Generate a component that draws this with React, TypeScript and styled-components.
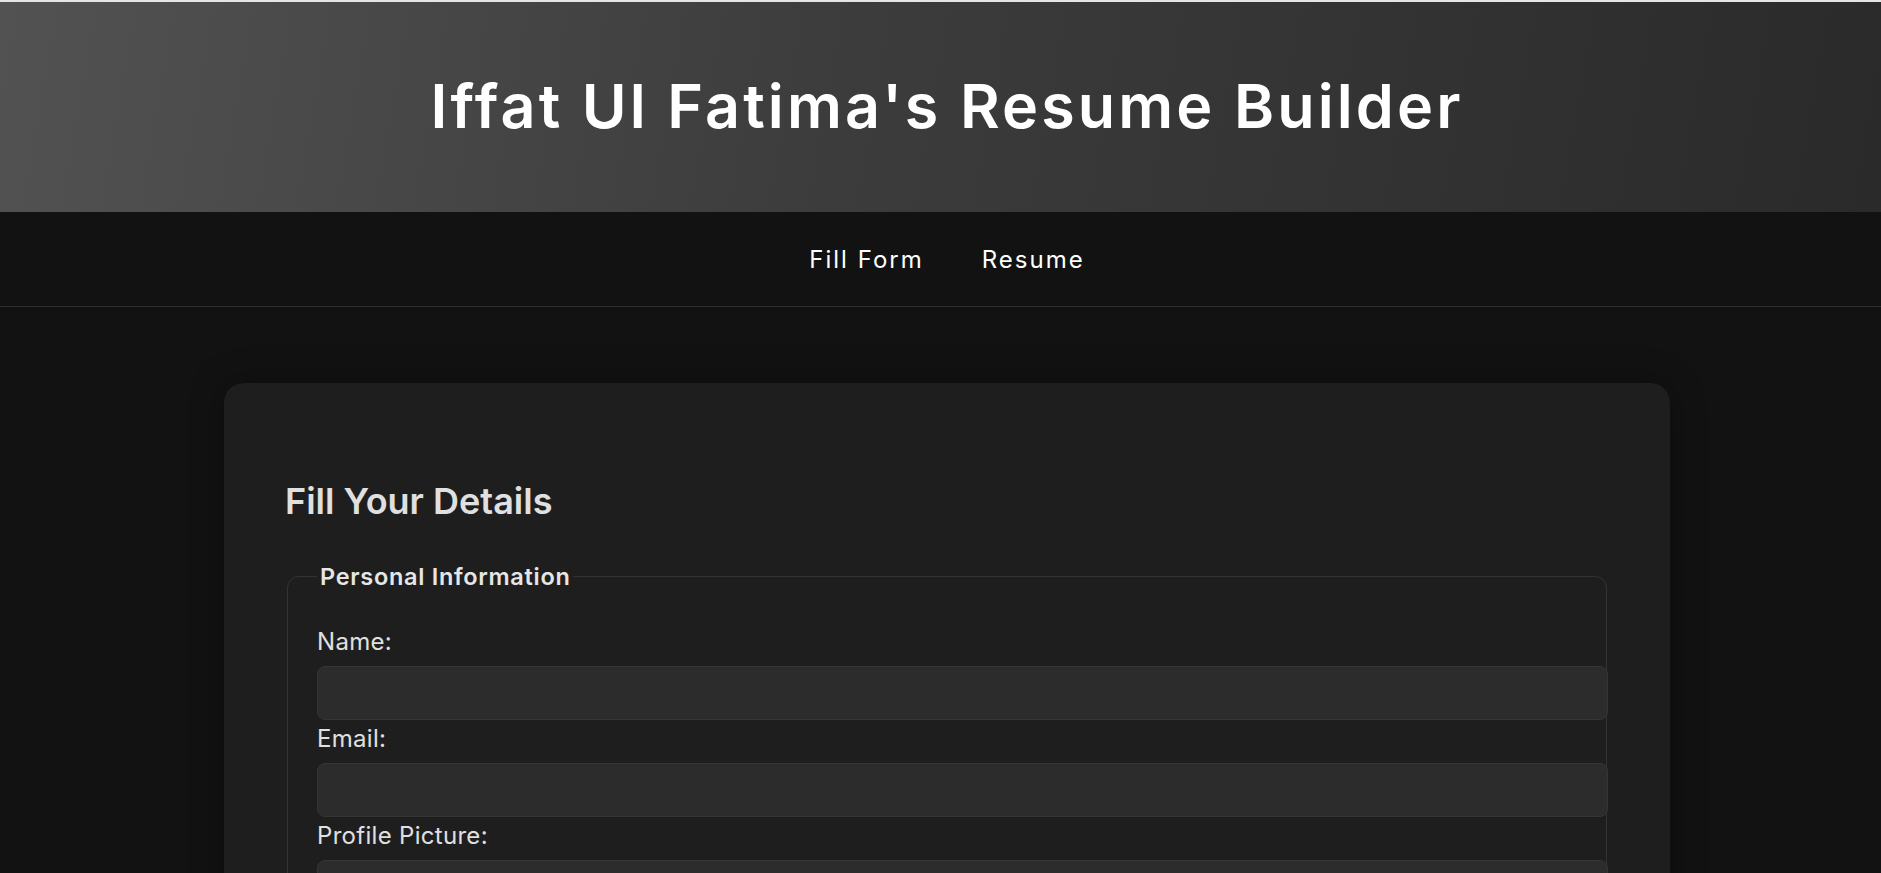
import React from "react";
import styled, { createGlobalStyle } from "styled-components";

const GlobalStyle = createGlobalStyle`
  * { box-sizing: border-box; }
  html, body { margin: 0; padding: 0; }
  body {
    background: #121212;
    color: #e0e0e0;
    font-family: Inter, "Open Sans", Arial, sans-serif;
    border-top: 2px solid #e5e5e5;
  }
`;

const Header = styled.header`
  height: 210px;
  background: linear-gradient(100deg, #525252 0%, #3c3c3c 45%, #2a2a2a 100%);
  display: flex;
  align-items: center;
  justify-content: center;
  padding-left: 13px;
`;

const Title = styled.h1`
  margin: 0;
  font-size: 61px;
  font-weight: 600;
  letter-spacing: 3.1px;
  color: #ffffff;
  line-height: 1.2;
`;

const Nav = styled.nav`
  height: 95px;
  border-bottom: 1px solid #2e2e2e;
  background: #121212;
  display: flex;
  align-items: center;
  justify-content: center;
  gap: 58px;
  padding-left: 13px;
`;

const NavLink = styled.a`
  color: #ffffff;
  font-size: 24px;
  font-weight: 400;
  letter-spacing: 2px;
  text-decoration: none;
`;

const Main = styled.main`
  padding: 76px 211px 0 224px;
`;

const Card = styled.section`
  background: #1e1e1e;
  border-radius: 20px;
  box-shadow: 0 0 36px rgba(0, 0, 0, 0.3);
  padding: 96px 61px 40px;
`;

const Heading = styled.h2`
  margin: 0 0 41px;
  font-size: 36px;
  font-weight: 600;
  line-height: 44px;
  color: #e0e0e0;
`;

const Fieldset = styled.fieldset`
  margin: 0 2px;
  border: 1px solid #333333;
  border-radius: 12px;
  padding: 35px 0 20px 29px;
`;

const Legend = styled.legend`
  padding: 0 3px;
  font-size: 23.5px;
  font-weight: 600;
  letter-spacing: 0.7px;
  line-height: 25px;
  color: #e6e6e6;
`;

const Label = styled.label`
  display: block;
  font-size: 24px;
  letter-spacing: 0.3px;
  line-height: 36px;
  color: #e0e0e0;
  margin-bottom: 6px;
`;

const Input = styled.input`
  display: block;
  width: calc(100% + 2px);
  height: 54px;
  margin: 0 0 1px;
  background: #2c2c2c;
  border: 1px solid #353535;
  border-radius: 8px;
  color: #e0e0e0;
  font-family: inherit;
  font-size: 18px;
  padding: 0 14px;
  outline: none;
`;

const fields = [
  { id: "name", label: "Name:", type: "text" },
  { id: "email", label: "Email:", type: "email" },
  { id: "picture", label: "Profile Picture:", type: "text" },
];

export default function App() {
  return (
    <>
      <GlobalStyle />
      <Header>
        <Title>Iffat Ul Fatima's Resume Builder</Title>
      </Header>
      <Nav>
        <NavLink href="#form">Fill Form</NavLink>
        <NavLink href="#resume">Resume</NavLink>
      </Nav>
      <Main>
        <Card>
          <Heading>Fill Your Details</Heading>
          <Fieldset>
            <Legend>Personal Information</Legend>
            {fields.map((f) => (
              <div key={f.id}>
                <Label htmlFor={f.id}>{f.label}</Label>
                <Input id={f.id} type={f.type} />
              </div>
            ))}
          </Fieldset>
        </Card>
      </Main>
    </>
  );
}
